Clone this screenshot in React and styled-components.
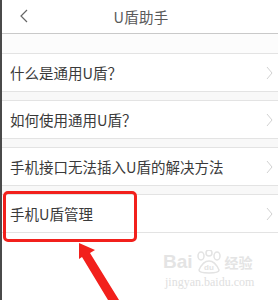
import React from 'react';
import styled, {createGlobalStyle} from 'styled-components';

const Global = createGlobalStyle`
  html, body {
    margin: 0;
    padding: 0;
    background: #fff;
  }
  body {
    font-family: "Noto Sans CJK SC", "Noto Sans", sans-serif;
  }
`;

const Page = styled.div`
  position: relative;
  width: 278px;
  height: 300px;
  box-sizing: border-box;
  border-left: 2px solid #4a4a4a;
  background: #fff;
  overflow: hidden;
`;

const Header = styled.div`
  position: relative;
  height: 33px;
  display: flex;
  align-items: center;
  justify-content: center;
  border-bottom: 1px solid #c9c9c9;
`;

const Back = styled.div`
  position: absolute;
  left: 16px;
  top: 8px;
  display: flex;
`;

const Title = styled.div`
  font-size: 14.5px;
  color: #5a5a5a;
  letter-spacing: 0.2px;
  margin-left: 2px;
`;

const Spacer = styled.div`
  height: 19px;
  background: #fcfcfc;
`;

const List = styled.div`
  display: flex;
  flex-direction: column;
  gap: 8px;
  background: #f8f8f8;
`;

const Row = styled.div`
  height: 37px;
  display: flex;
  align-items: center;
  justify-content: space-between;
  padding: 0 4px 0 8px;
  background: #fff;
  border-top: 1px solid #e3e3e3;
  border-bottom: 1px solid #e3e3e3;
`;

const Label = styled.span`
  font-size: 14.5px;
  color: #3a3a3a;
`;

const Box = styled.div`
  position: absolute;
  left: 1px;
  top: 191px;
  width: 134px;
  height: 51px;
  box-sizing: border-box;
  border: 3px solid #f2201c;
  border-radius: 5px;
`;

const Arrow = styled.svg`
  position: absolute;
  left: 0;
  top: 0;
`;

const Mark = styled.div`
  position: absolute;
  left: 161px;
  top: 250px;
  display: flex;
  flex-direction: column;
  align-items: flex-start;
  color: #e4e4e4;
  pointer-events: none;
`;

const MarkTop = styled.div`
  display: flex;
  align-items: center;
  gap: 2px;
  font-family: "Liberation Sans", sans-serif;
  font-weight: bold;
  font-size: 19px;
  line-height: 22px;
`;

const MarkCn = styled.span`
  font-family: "Noto Sans CJK SC", sans-serif;
  font-size: 14px;
  font-weight: bold;
`;

const MarkUrl = styled.span`
  font-family: "Liberation Serif", serif;
  font-size: 12px;
  line-height: 16px;
  margin-left: 2px;
  color: #e0e0e0;
`;

const Chevron = () => (
  <svg width="8" height="14" viewBox="0 0 8 14">
    <polyline points="1,1 6,7 1,13" fill="none" stroke="#d2d2d2" strokeWidth="1" />
  </svg>
);

const items = [
  '什么是通用U盾？',
  '如何使用通用U盾？',
  '手机接口无法插入U盾的解决方法',
  '手机U盾管理',
];

export default function App() {
  return (
    <Page>
      <Global />
      <Header>
        <Back>
          <svg width="12" height="16" viewBox="0 0 12 16">
            <polyline points="9,2 3,8 9,14" fill="none" stroke="#666" strokeWidth="1.2" />
          </svg>
        </Back>
        <Title>U盾助手</Title>
      </Header>
      <Spacer />
      <List>
        {items.map(t => (
          <Row key={t}>
            <Label>{t}</Label>
            <Chevron />
          </Row>
        ))}
      </List>
      <Mark>
        <MarkTop>
          <span>Bai</span>
          <svg width="28" height="24" viewBox="0 0 28 24">
            <ellipse cx="6" cy="6" rx="3" ry="4" fill="none" stroke="#e3e3e3" strokeWidth="1.5" />
            <ellipse cx="14" cy="3" rx="3" ry="3" fill="none" stroke="#e3e3e3" strokeWidth="1.5" />
            <ellipse cx="22" cy="6" rx="3" ry="4" fill="none" stroke="#e3e3e3" strokeWidth="1.5" />
            <path d="M4 20 Q8 11 14 11 Q20 11 24 20 Q24 23 14 23 Q4 23 4 20 Z" fill="none" stroke="#e3e3e3" strokeWidth="1.5" />
            <text x="14" y="20" fontSize="8" textAnchor="middle" fill="#e3e3e3" fontFamily="Liberation Sans" fontWeight="bold">du</text>
          </svg>
          <MarkCn>经验</MarkCn>
        </MarkTop>
        <MarkUrl>jingyan.baidu.com</MarkUrl>
      </Mark>
      <Box />
      <Arrow width="278" height="300" viewBox="0 0 278 300">
        <polygon points="77,243 93,250 88,253 117,300 106,300 80,257 77,259" fill="#f2201c" />
      </Arrow>
    </Page>
  );
}
